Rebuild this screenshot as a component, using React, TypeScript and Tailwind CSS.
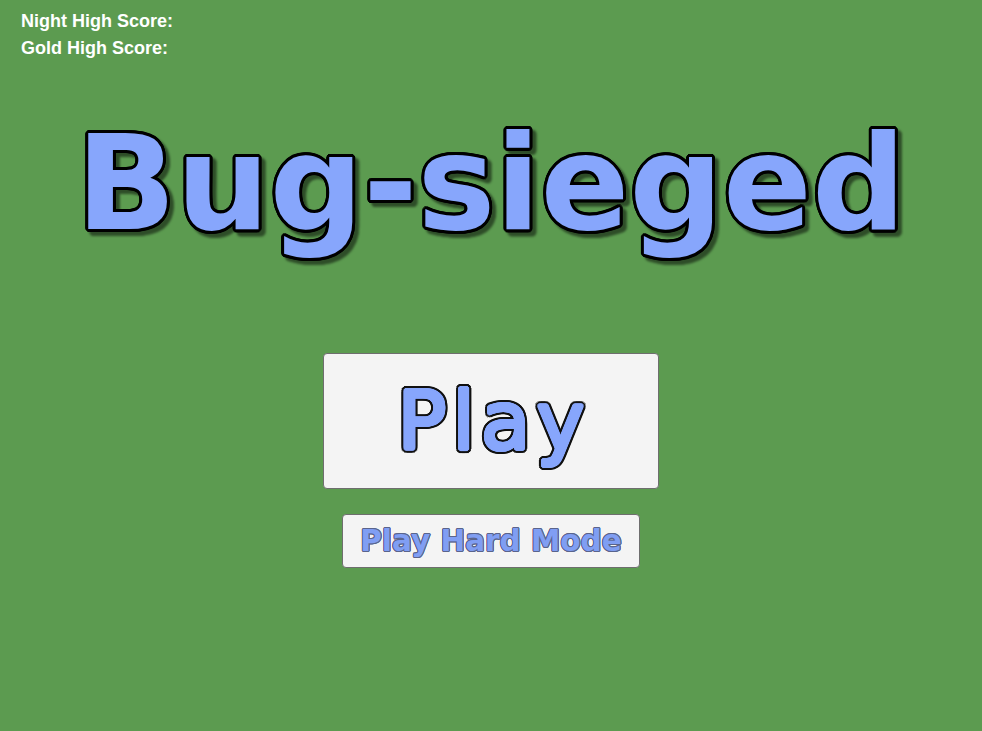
// ring of text-shadows = round outline around the glyphs
function ring(radius: number, color: string, steps = 16) {
  const out: string[] = []
  for (const r of [radius, radius * 0.5]) {
    for (let i = 0; i < steps; i++) {
      const a = (i / steps) * Math.PI * 2
      out.push(`${(Math.cos(a) * r).toFixed(2)}px ${(Math.sin(a) * r).toFixed(2)}px 0 ${color}`)
    }
  }
  return out.join(', ')
}

const dejavu = { fontFamily: '"DejaVu Sans", Verdana, sans-serif' }
const blue = '#87a6fc'

export default function App() {
  return (
    <div
      className="w-[982px] h-[731px] bg-[#5c9b50] flex flex-col overflow-hidden"
      style={{ fontFamily: '"Liberation Sans", Arial, sans-serif' }}
    >
      <div className="pl-[21px] pt-[8px] text-white font-bold text-[18px] leading-[27px] flex flex-col">
        <div>Night High Score:</div>
        <div>Gold High Score:</div>
      </div>

      <h1
        className="mt-[56px] text-center font-bold text-[131px] leading-[131px] text-[#87a6fc] drop-shadow-[4px_4px_1px_rgba(0,0,0,0.5)]"
        style={{ ...dejavu, textShadow: ring(3, '#000') }}
      >
        Bug-sieged
      </h1>

      <div className="mt-[104px] flex flex-col items-center gap-[25px]">
        <button
          type="button"
          className="w-[336px] h-[136px] bg-[#f4f4f4] border border-[#6e6e6e] rounded-[4px] flex items-center justify-center"
        >
          <span
            className="font-normal text-[81px] leading-[81px] tracking-[6px] pl-[6px] text-[#87a6fc]"
            style={{ ...dejavu, textShadow: `${ring(1.8, blue)}, ${ring(4, '#111')}` }}
          >
            Play
          </span>
        </button>
        <button
          type="button"
          className="w-[298px] h-[54px] bg-[#f4f4f4] border border-[#6e6e6e] rounded-[4px] flex items-center justify-center"
        >
          <span
            className="font-bold text-[29.5px] leading-[30px] text-[#809ef3]"
            style={{ ...dejavu, textShadow: ring(1, 'rgba(90,100,140,0.75)') }}
          >
            Play Hard Mode
          </span>
        </button>
      </div>
    </div>
  )
}
